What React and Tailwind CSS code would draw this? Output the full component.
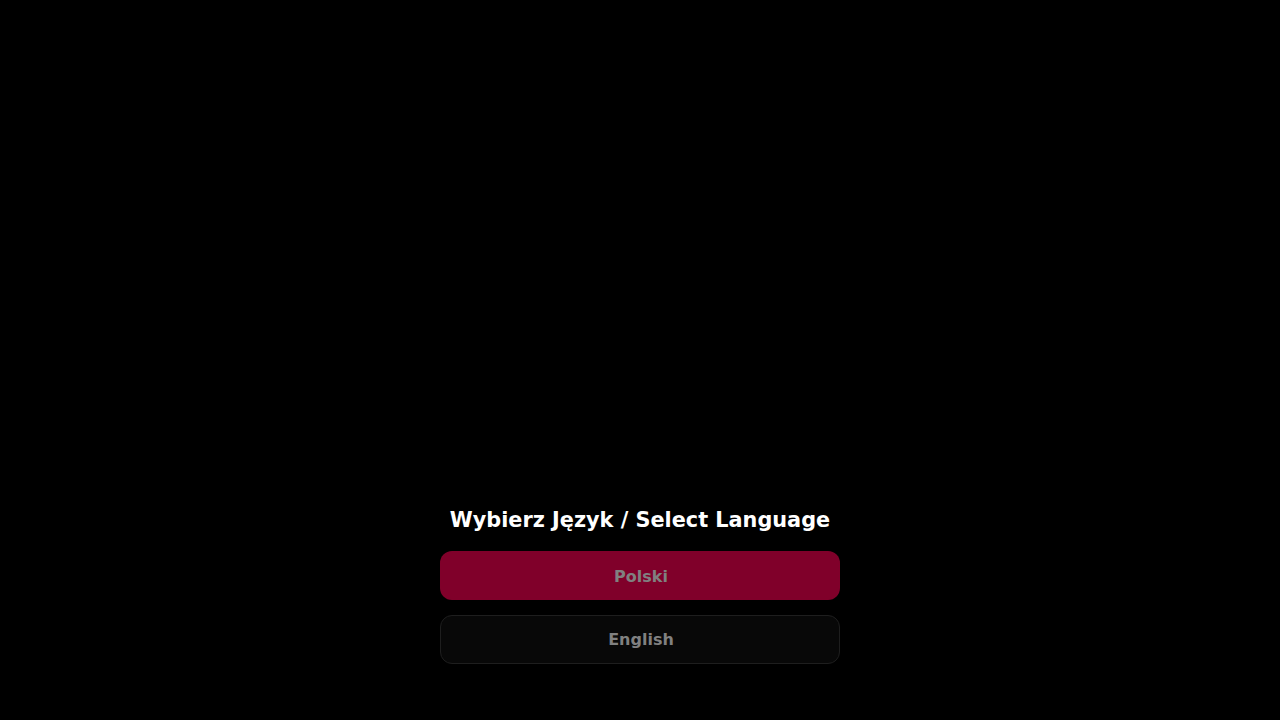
export default function App() {
  return (
    <div className="w-full h-[720px] bg-black flex flex-col items-center justify-end pb-[56px]" style={{ fontFamily: '"DejaVu Sans", sans-serif' }}>
      <h1 className="text-white font-bold text-[20.8px] leading-[28px] pt-[1px] mb-[17px]">Wybierz Język / Select Language</h1>
      <button className="w-[400px] h-[49px] rounded-[12px] bg-[#80002a] text-[#808080] font-bold text-[16px] pl-[2px] pt-[2px] mb-[15px]">Polski</button>
      <button className="w-[400px] h-[49px] rounded-[12px] bg-[#080808] border border-[#1e1e1e] text-[#808080] font-bold text-[16px] pl-[2px] pt-[1px]">English</button>
    </div>
  );
}
